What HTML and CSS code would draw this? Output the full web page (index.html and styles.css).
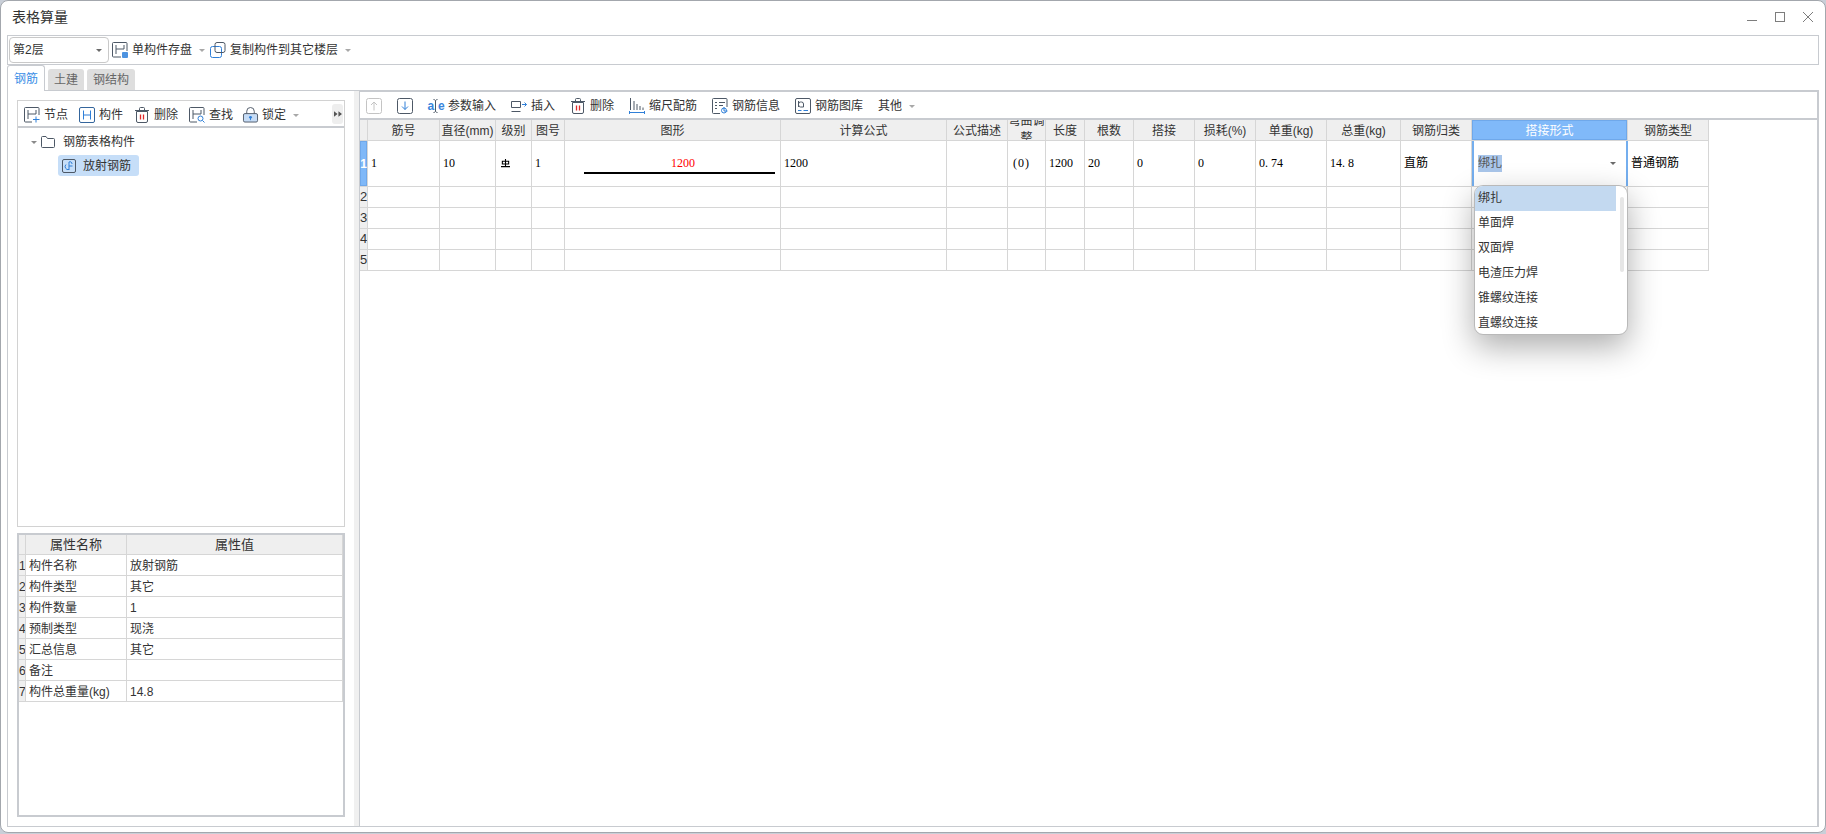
FILE: index.html
```html
<!DOCTYPE html>
<html lang="zh">
<head>
<meta charset="utf-8">
<title>表格算量</title>
<link rel="stylesheet" href="styles.css">
</head>
<body>
<div class="window">
  <header class="titlebar">
    <span class="title">表格算量</span>
    <div class="wincontrols">
      <svg class="wc" viewBox="0 0 10 10"><path d="M0 8.5H10"/></svg>
      <svg class="wc" viewBox="0 0 10 10"><rect x=".5" y=".5" width="9" height="9"/></svg>
      <svg class="wc" viewBox="0 0 10 10"><path d="M0 0L10 10M10 0L0 10"/></svg>
    </div>
  </header>

  <div class="topbar">
    <div class="combo"><span>第2层</span><i class="arrow dark"></i></div>
    <svg class="ic" viewBox="0 0 16 16"><path class="ln" d="M9 15H1.5a1 1 0 0 1-1-1V1.5a1 1 0 0 1 1-1H14a1 1 0 0 1 1 1V9"/><path class="ln" d="M4 3v9M4 7h8M12 3v4"/><rect class="fb" x="10" y="10" width="6" height="6" rx="1"/></svg>
    <span>单构件存盘</span><i class="arrow"></i>
    <svg class="ic copy" viewBox="0 0 16 16"><rect class="lb" x=".5" y="4.5" width="11" height="11" rx="2" fill="#dbe9fa"/><rect class="ln" x="5" y=".5" width="10" height="10" rx="2" fill="#fff"/></svg>
    <span>复制构件到其它楼层</span><i class="arrow"></i>
  </div>

  <nav class="tabs">
    <span class="tab active">钢筋</span>
    <span class="tab">土建</span>
    <span class="tab">钢结构</span>
  </nav>

  <main class="main">
    <section class="left">
      <div class="treebox">
        <div class="lefttools">
          <svg class="ic" viewBox="0 0 16 16"><path class="ln" d="M8 15H1.5a1 1 0 0 1-1-1V1.5a1 1 0 0 1 1-1H14a1 1 0 0 1 1 1V8"/><path class="ln" d="M4 3v9M4 7h8M12 3v4"/><path class="lb" d="M12 9.5v6M9 12.5h6.5"/></svg>
          <span>节点</span>
          <svg class="ic gap" viewBox="0 0 16 16"><rect class="lb dk" x=".5" y=".5" width="15" height="15" rx="1.5"/><path class="lb" d="M4.5 3.5v9M11.5 3.5v9M4.5 8h7"/></svg>
          <span>构件</span>
          <svg class="ic gap" viewBox="0 0 16 16"><path class="ln" d="M2.5 4.5h11V14a1.500 1.500 0 0 1-1.500 1.500H4A1.500 1.500 0 0 1 2.500 14zM1 3.500h14M5.500 3V1.500a1 1 0 0 1 1-1h3a1 1 0 0 1 1 1V3"/><path class="lr" d="M6.500 7.500v5M9.500 7.500v5"/></svg>
          <span>删除</span>
          <svg class="ic gap" viewBox="0 0 16 16"><path class="ln" d="M8 15H1.500a1 1 0 0 1-1-1V1.500a1 1 0 0 1 1-1H14a1 1 0 0 1 1 1V8"/><path class="ln" d="M4 3v9M4 7h8M12 3v4"/><circle class="lb" cx="11.500" cy="11.500" r="2.500"/><path class="lb" d="M13.500 13.500L15.500 15.500"/></svg>
          <span>查找</span>
          <svg class="ic gap lock" viewBox="0 0 16 16"><path class="ln" d="M4 7V4a4 4 0 0 1 8 0v3"/><rect x=".5" y="6.500" width="15" height="9" rx="1.500" fill="#c6dcf6" stroke="#4d5866"/><circle cx="8" cy="10.500" r="1.500" fill="#2f7fd8"/><path class="lb" d="M8 11v2.500"/></svg>
          <span>锁定</span><i class="arrow"></i>
          <div class="more"><svg class="moreic" viewBox="0 0 9 6"><path d="M0 0l4 3-4 3zM5 0l4 3-4 3z"/></svg></div>
        </div>
        <div class="tree">
          <div class="node root">
            <i class="arrow dark"></i>
            <svg class="folder" viewBox="0 0 14 12"><path class="ln" d="M.5 10.500V1.500a1 1 0 0 1 1-1h3.500l1.500 2h6a1 1 0 0 1 1 1v7a1 1 0 0 1-1 1h-11a1 1 0 0 1-1-1z"/></svg>
            <span>钢筋表格构件</span>
          </div>
          <div class="node leaf">
            <svg class="leaficon" viewBox="0 0 14 14"><rect class="ln" x=".5" y=".5" width="13" height="13" rx="1.500"/><path class="lb" d="M7 3v8M7 7h3.500M4 5.500a3 3 0 0 0 3 5M7 3a2 2 0 0 1 3 2"/></svg>
            <span>放射钢筋</span>
          </div>
        </div>
      </div>

      <div class="propbox">
        <table class="prop">
          <colgroup><col class="pc0"><col class="pc1"><col class="pc2"></colgroup>
          <thead><tr><th></th><th>属性名称</th><th>属性值</th></tr></thead>
          <tbody>
            <tr><th>1</th><td>构件名称</td><td>放射钢筋</td></tr>
            <tr><th>2</th><td>构件类型</td><td>其它</td></tr>
            <tr><th>3</th><td>构件数量</td><td>1</td></tr>
            <tr><th>4</th><td>预制类型</td><td>现浇</td></tr>
            <tr><th>5</th><td>汇总信息</td><td>其它</td></tr>
            <tr><th>6</th><td>备注</td><td></td></tr>
            <tr><th>7</th><td>构件总重量(kg)</td><td>14.8</td></tr>
          </tbody>
        </table>
      </div>
    </section>

    <div class="splitter"></div>

    <section class="right">
      <div class="righttools">
        <svg class="ic off" viewBox="0 0 16 16"><rect x=".5" y=".5" width="15" height="15" rx="2"/><path d="M8 12.500V4M5 7l3-3 3 3"/></svg>
        <svg class="ic" viewBox="0 0 16 16"><rect class="ln" x=".5" y=".5" width="15" height="15" rx="2"/><path class="lb" d="M8 3.500V11.500M5 8.500l3 3 3-3"/></svg>
        <div class="item">
          <svg class="ic" viewBox="0 0 16 16"><text class="ictext" x="-.5" y="12">a</text><text class="ictext" x="10" y="12">e</text><path class="ln" d="M5.500 1.500c1 0 1.500.5 2 1 .5-.5 1-1 2-1M7.500 2.500v11M5.500 14.500c1 0 1.500-.5 2-1 .5.500 1 1 2 1"/></svg>
          <span>参数输入</span>
        </div>
        <div class="item">
          <svg class="ic" viewBox="0 0 16 16"><path class="ln" d="M9.500 3.500H.5v6h9V3.500zM.5 13.500h9"/><path class="lb" d="M11 6.500h4.500M13.500 4.500l2 2-2 2"/></svg>
          <span>插入</span>
        </div>
        <div class="item">
          <svg class="ic" viewBox="0 0 16 16"><path class="ln" d="M2.500 4.500h11V14a1.500 1.500 0 0 1-1.500 1.500H4A1.500 1.500 0 0 1 2.500 14zM1 3.500h14M5.500 3V1.500a1 1 0 0 1 1-1h3a1 1 0 0 1 1 1V3"/><path class="lr" d="M6.500 7.500v5M9.500 7.500v5"/></svg>
          <span>删除</span>
        </div>
        <div class="item">
          <svg class="ic" viewBox="0 0 16 16"><path class="ln" d="M1.500 0v12M5 3v9M8 6v6M11 8v4M14 9.500v2.500"/><path class="lb" d="M.5 14.500h15M.5 13v3M15.500 13v3"/></svg>
          <span>缩尺配筋</span>
        </div>
        <div class="item">
          <svg class="ic" viewBox="0 0 16 16"><path class="ln" d="M8 15.500H1.500a1 1 0 0 1-1-1V1.500a1 1 0 0 1 1-1H14a1 1 0 0 1 1 1V9M3 4.500h2M7 4.500h6M3 7.500h2M7 7.500h4M3 10.500h2"/><circle class="lb" cx="12" cy="12.500" r="2.500"/><path class="lb" d="M12 9v4h3.500"/></svg>
          <span>钢筋信息</span>
        </div>
        <div class="item">
          <svg class="ic" viewBox="0 0 16 16"><rect class="ln" x=".5" y=".5" width="15" height="15" rx="1.500"/><path class="ln" d="M3.500 3v6M3.500 6a2 2 0 0 1 2-2h1a2 2 0 0 1 2 2v3h-3a1.500 1.500 0 0 1-1.500-1.500"/><path class="lb" d="M3 12.500h3.500M8.500 12.500H13"/></svg>
          <span>钢筋图库</span>
        </div>
        <div class="item other"><span>其他</span><i class="arrow"></i></div>
      </div>

      <div class="gridwrap">
        <table class="grid">
          <colgroup>
            <col class="g0"><col class="g1"><col class="g2"><col class="g3"><col class="g4"><col class="g5"><col class="g6"><col class="g7"><col class="g8"><col class="g9"><col class="g10"><col class="g11"><col class="g12"><col class="g13"><col class="g14"><col class="g15"><col class="g16"><col class="g17">
          </colgroup>
          <thead>
            <tr>
              <th></th><th>筋号</th><th>直径(mm)</th><th>级别</th><th>图号</th><th>图形</th><th>计算公式</th><th>公式描述</th>
              <th class="wrapcell"><div class="clipped">弯曲调整</div></th>
              <th>长度</th><th>根数</th><th>搭接</th><th>损耗(%)</th><th>单重(kg)</th><th>总重(kg)</th><th>钢筋归类</th>
              <th class="selhead">搭接形式</th><th>钢筋类型</th>
            </tr>
          </thead>
          <tbody>
            <tr class="first">
              <th class="selrow">1</th>
              <td class="num">1</td>
              <td class="num">10</td>
              <td class="grade"><svg class="gradeic" viewBox="0 0 10 10"><path d="M5 0v8M1.500 2.500h7v3h-7zM0 8.500h10"/></svg></td>
              <td class="num">1</td>
              <td class="shape"><div class="shapelabel">1200</div><div class="shapeline"></div></td>
              <td class="num">1200</td>
              <td></td>
              <td class="num paren">(0)</td>
              <td class="num">1200</td>
              <td class="num">20</td>
              <td class="num">0</td>
              <td class="num">0</td>
              <td class="num">0<span class="dot">.</span>74</td>
              <td class="num">14<span class="dot">.</span>8</td>
              <td class="cn">直筋</td>
              <td class="editor">
                <div class="editrow"><span class="seltext">绑扎</span><i class="arrow dark"></i></div>
                <div class="dropdown">
                  <div class="opt current">绑扎</div>
                  <div class="opt">单面焊</div>
                  <div class="opt">双面焊</div>
                  <div class="opt">电渣压力焊</div>
                  <div class="opt">锥螺纹连接</div>
                  <div class="opt">直螺纹连接</div>
                  <div class="thumb"></div>
                </div>
              </td>
              <td class="cn">普通钢筋</td>
            </tr>
            <tr><th>2</th><td></td><td></td><td></td><td></td><td></td><td></td><td></td><td></td><td></td><td></td><td></td><td></td><td></td><td></td><td></td><td></td><td></td></tr>
            <tr><th>3</th><td></td><td></td><td></td><td></td><td></td><td></td><td></td><td></td><td></td><td></td><td></td><td></td><td></td><td></td><td></td><td></td><td></td></tr>
            <tr><th>4</th><td></td><td></td><td></td><td></td><td></td><td></td><td></td><td></td><td></td><td></td><td></td><td></td><td></td><td></td><td></td><td></td><td></td></tr>
            <tr><th>5</th><td></td><td></td><td></td><td></td><td></td><td></td><td></td><td></td><td></td><td></td><td></td><td></td><td></td><td></td><td></td><td></td><td></td></tr>
          </tbody>
        </table>
      </div>
    </section>
  </main>
</div>
</body>
</html>
```

FILE: styles.css
```css
* { box-sizing: border-box; }
html, body { margin: 0; height: 100%; }
body {
  background: #c9cfd8;
  overflow: hidden;
  font-family: "Liberation Sans", "Noto Sans CJK SC", sans-serif;
  font-size: 12px;
  line-height: 16px;
  color: #333;
}
.window {
  width: 1826px;
  height: 833px;
  display: flex;
  flex-direction: column;
  background: #fff;
  border: 1px solid #a3a7ad;
  border-radius: 8px;
  padding: 0 6px 5px;
  overflow: hidden;
}

/* title */
.titlebar {
  height: 34px;
  flex: none;
  display: flex;
  align-items: center;
  justify-content: space-between;
  padding: 4px 6px 6px 5px;
}
.title { font-size: 14px; }
.wincontrols { display: flex; gap: 18px; }
.wc { width: 10px; height: 10px; fill: none; stroke: #7d7d7d; stroke-width: 1; overflow: visible; }

/* common icon strokes */
.ic { width: 16px; height: 16px; flex: none; fill: none; overflow: visible; }
.ln { fill: none; stroke: #4d5866; stroke-width: 1; }
.lb { fill: none; stroke: #2f7fd8; stroke-width: 1; }
.lb.dk { stroke: #34659c; }
.lr { fill: none; stroke: #e02a2a; stroke-width: 1.300; }
.fb { fill: #4d93e0; }
.ictext { font-family: "Liberation Sans", sans-serif; font-size: 12px; font-weight: 700; fill: #3a86dc; }
.off rect, .off path { stroke: #c4c4c4; fill: none; }
.arrow {
  display: inline-block;
  width: 0;
  height: 0;
  flex: none;
  border-left: 3px solid transparent;
  border-right: 3px solid transparent;
  border-top: 3px solid #a8a8a8;
}
.arrow.dark { border-top-color: #6a6a6a; }

/* top toolbar */
.topbar {
  height: 30px;
  flex: none;
  display: flex;
  align-items: center;
  border: 1px solid #c8cbd0;
  padding-left: 1px;
}
.combo {
  width: 100px;
  height: 26px;
  display: flex;
  align-items: center;
  justify-content: space-between;
  border: 1px solid #c9c9c9;
  border-radius: 4px;
  padding: 0 6px 0 3px;
  margin-right: 3px;
}
.topbar > svg + span { margin-left: 4px; }
.topbar > .arrow { margin-left: 7px; margin-right: 5px; }

/* tabs */
.tabs {
  height: 26px;
  flex: none;
  display: flex;
  align-items: flex-end;
  gap: 3px;
  position: relative;
  z-index: 2;
  margin-bottom: -1px;
}
.tab {
  height: 21px;
  padding: 0 6px;
  background: #dedede;
  color: #666;
  line-height: 23px;
  border-radius: 3px 3px 0 0;
  margin-bottom: 1px;
}
.tab.active {
  height: 26px;
  width: 38px;
  padding: 0 6px;
  background: #fff;
  color: #3a8ee6;
  border: 1px solid #c8cbd0;
  border-bottom: 0;
  line-height: 26px;
  margin-bottom: 0;
}

/* main */
.main {
  flex: 1;
  min-height: 0;
  display: flex;
  border: 1px solid #c8cbd0;
  border-right: 0;
}
.left {
  width: 346px;
  flex: none;
  display: flex;
  flex-direction: column;
  gap: 6px;
  padding: 9px 9px 9px;
}
.treebox {
  height: 427px;
  flex: none;
  display: flex;
  flex-direction: column;
  border: 1px solid #d2d2d2;
}
.lefttools {
  height: 27px;
  flex: none;
  display: flex;
  align-items: center;
  border-bottom: 2px solid #c8cbd0;
  padding: 3px 0 0 6px;
  position: relative;
}
.lefttools svg + span { margin-left: 4px; }
.lefttools .gap { margin-left: 11px; }
.lefttools .lock { width: 15px; margin-left: 10px; }
.lefttools .arrow { margin-left: 7px; }
.more {
  position: absolute;
  right: 1px;
  top: 3px;
  width: 11px;
  height: 20px;
  display: flex;
  align-items: center;
  justify-content: center;
  border-radius: 3px;
  background: #eeeeee;
}
.moreic { width: 8px; height: 6px; fill: #555; }
.tree { flex: 1; }
.node { display: flex; align-items: center; }
.root {
  height: 28px;
  padding-left: 13px;
  margin-bottom: -1px;
}
.root .arrow { border-top-color: #8a8a8a; }
.folder { width: 14px; height: 12px; margin-left: 4px; margin-right: 8px; overflow: visible; }
.leaf {
  width: 81px;
  height: 21px;
  margin-left: 40px;
  padding-left: 4px;
  gap: 7px;
  background: #c6def8;
  border-radius: 3px;
}
.leaficon { width: 14px; height: 14px; flex: none; overflow: visible; }

/* property table */
.propbox {
  height: 284px;
  flex: none;
  border: 2px solid #c8cbd0;
}
table { border-collapse: separate; border-spacing: 0; table-layout: fixed; }
th, td {
  padding: 0;
  border-right: 1px solid #d6d6d6;
  border-bottom: 1px solid #d6d6d6;
  font-weight: 400;
  overflow: hidden;
  white-space: nowrap;
}
th { background: #efefef; text-align: center; }
.prop { width: 324px; }
.pc0 { width: 7px; }
.pc1 { width: 101px; }
.pc2 { width: 216px; }
.prop thead th { height: 20px; font-size: 13px; }
.prop tbody th, .prop tbody td { height: 21px; padding-top: 1px; }
.prop tbody th { font-size: 12px; }
.prop td { padding-left: 3px; }

.splitter { width: 5px; flex: none; background: #f0f0f0; }

/* right */
.right {
  flex: 1;
  min-width: 0;
  display: flex;
  flex-direction: column;
  border-left: 1px solid #c8cbd0;
  border-top: 1px solid #c8cbd0;
  border-right: 2px solid #c8cbd0;
}
.righttools {
  height: 28px;
  flex: none;
  display: flex;
  align-items: center;
  gap: 15px;
  padding: 2px 0 0 6px;
  border-bottom: 2px solid #c8cbd0;
}
.item { display: flex; align-items: center; gap: 4px; }
.other { gap: 7px; }
.gridwrap { flex: 1; min-height: 0; }
.grid { width: 1349px; }
.g0 { width: 8px; }
.g1 { width: 72px; }
.g2 { width: 56px; }
.g3 { width: 36px; }
.g4 { width: 33px; }
.g5 { width: 216px; }
.g6 { width: 166px; }
.g7 { width: 61px; }
.g8 { width: 38px; }
.g9 { width: 39px; }
.g10 { width: 49px; }
.g11 { width: 61px; }
.g12 { width: 61px; }
.g13 { width: 71px; }
.g14 { width: 74px; }
.g15 { width: 71px; }
.g16 { width: 156px; }
.g17 { width: 81px; }
.grid thead th { height: 21px; padding-top: 1px; }
.grid thead th.wrapcell { padding-top: 0; }
.grid tbody th, .grid tbody td { height: 21px; }
.grid tbody th { font-size: 13px; }
.grid .first th, .grid .first td { height: 46px; }
.clipped {
  height: 20px;
  display: flex;
  align-items: center;
  justify-content: center;
  overflow: hidden;
  white-space: normal;
  line-height: 17px;
  text-align: center;
}
.selhead {
  background: #80b9f9;
  color: #fff;
  box-shadow: inset 0 0 0 1px #6fa8ea;
}
.grid .first .selrow {
  background: #7fb8f8;
  color: #fff;
  font-weight: 700;
  font-size: 12px;
  box-shadow: inset 0 0 0 1px #6fa8ea;
}
.num {
  padding: 0 0 1px 3px;
  font-family: "Liberation Serif", serif;
  font-size: 12px;
  color: #000;
}
.num.paren { padding-left: 5px; letter-spacing: 1px; }
.dot { display: inline-block; width: 6px; }
.cn { padding: 0 0 1px 3px; color: #000; }
.grade { padding: 0 0 1px 5px; }
.gradeic { display: block; width: 9px; height: 9px; fill: none; stroke: #000; stroke-width: 1.200; }
.shape { padding: 0 5px 0 19px; }
.shapelabel {
  padding-left: 7px;
  padding-top: 1px;
  text-align: center;
  color: #f00;
  font-family: "Liberation Serif", serif;
  font-size: 12px;
}
.shapeline { height: 2px; background: #000; margin-top: 1px; }

/* in-cell editor and list */
td.editor {
  position: relative;
  overflow: visible;
  padding: 0 2px;
  box-shadow: inset 2px 0 #74aeee, inset -2px 0 #74aeee;
  border-right: 0;
}
.editrow {
  display: flex;
  align-items: center;
  justify-content: space-between;
  padding: 0 10px 0 4px;
}
.seltext { background: #a9c6ea; color: #555; height: 17px; line-height: 17px; }
.dropdown {
  position: absolute;
  left: 2px;
  top: 44px;
  width: 154px;
  height: 150px;
  background: #fff;
  border: 1px solid #b9b9b9;
  border-radius: 9px;
  box-shadow: 0 12px 32px rgba(0, 0, 0, .32);
  z-index: 5;
  overflow: hidden;
}
.opt {
  width: 141px;
  height: 25px;
  line-height: 24px;
  padding-left: 3px;
  color: #333;
}
.opt.current { background: #c3d9f0; }
.thumb {
  position: absolute;
  left: 145px;
  top: 11px;
  width: 4px;
  height: 75px;
  background: #e6e6e6;
  border-radius: 2px;
}
```
